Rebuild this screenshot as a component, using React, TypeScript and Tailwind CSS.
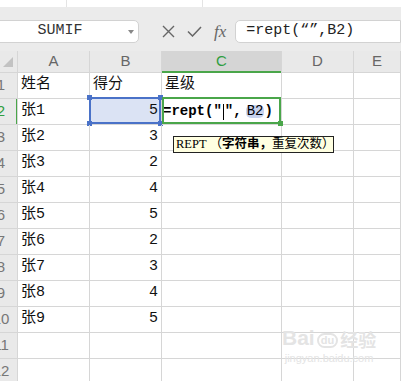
import React from 'react';

const cellFont = { fontFamily: '"Liberation Mono", "Noto Sans CJK SC", monospace' };

const rows: { name: string; score: string }[] = [
  { name: '姓名', score: '得分' },
  { name: '张1', score: '5' },
  { name: '张2', score: '3' },
  { name: '张3', score: '2' },
  { name: '张4', score: '4' },
  { name: '张5', score: '5' },
  { name: '张6', score: '2' },
  { name: '张7', score: '3' },
  { name: '张8', score: '4' },
  { name: '张9', score: '5' },
  { name: '', score: '' },
  { name: '', score: '' },
];

const Cell = ({ className = '', children }: { className?: string; children?: React.ReactNode }) => (
  <div className={`relative shrink-0 h-full border-r border-b border-[#d6d6d6] ${className}`}>{children}</div>
);

export default function App() {
  return (
    <div className="relative w-[401px] h-[381px] overflow-hidden bg-white" style={cellFont}>
      {/* top strip */}
      <div className="h-[7px] bg-white flex">
        <div className="w-[67px] border-r border-[#e4e4e4]" />
        <div className="w-[136px] border-r border-[#e4e4e4]" />
      </div>

      {/* formula bar */}
      <div className="h-[44px] bg-[#ebebeb] flex items-start pt-[13px]">
        <div className="ml-[-7px] w-[146px] h-[23px] bg-white border border-[#d2d2d2] rounded-[5px] flex items-center">
          <span className="flex-1 text-center text-[15px] text-[#333] pl-[2px]">SUMIF</span>
          <span className="w-[14px] flex justify-center">
            <span className="block w-0 h-0 border-l-[3px] border-r-[3px] border-t-[4px] border-l-transparent border-r-transparent border-t-[#888]" />
          </span>
        </div>
        <div className="flex items-center h-[23px] ml-[23px] gap-[12px] text-[#666]">
          <svg width="13" height="13" viewBox="0 0 13 13">
            <path d="M1 1 L12 12 M12 1 L1 12" stroke="#666" strokeWidth="1.4" />
          </svg>
          <svg width="15" height="11" viewBox="0 0 15 11">
            <path d="M1 5.5 L5.5 10 L14 1" stroke="#666" strokeWidth="1.5" fill="none" />
          </svg>
          <span className="italic text-[17px] leading-none" style={{ fontFamily: '"Liberation Serif", serif' }}>
            fx
          </span>
        </div>
        <div className="ml-[9px] flex-1 h-[23px] bg-white border border-[#d2d2d2] rounded-l-[5px] flex items-center pl-[10px] text-[15px] text-[#222]">
          =rept(“”,B2)
        </div>
      </div>

      {/* column headers */}
      <div className="flex h-[22px] bg-[#e9e9e9] text-[15px] text-[#666]" style={{ fontFamily: '"Liberation Sans", sans-serif' }}>
        <Cell className="w-[18px] border-[#c8c8c8]">
          <div className="absolute right-[4px] bottom-[4px] w-0 h-0 border-l-[10px] border-t-[10px] border-l-transparent border-t-transparent border-r-0 border-b-0" style={{}} />
          <svg className="absolute left-[3px] top-[6px]" width="10" height="10" viewBox="0 0 10 10">
            <path d="M10 0 L10 10 L0 10 Z" fill="#c2c2c2" />
          </svg>
        </Cell>
        <Cell className="w-[72px] border-[#c8c8c8] flex items-center justify-center">A</Cell>
        <Cell className="w-[72px] border-[#c8c8c8] flex items-center justify-center">B</Cell>
        <Cell className="w-[120px] bg-[#d5d5d5] border-[#c8c8c8] flex items-center justify-center text-[#2f9e3f]">
          C
          <div className="absolute left-0 right-0 bottom-[-1px] h-[2px] bg-[#4aa64a]" />
        </Cell>
        <Cell className="w-[72px] border-[#c8c8c8] flex items-center justify-center">D</Cell>
        <Cell className="flex-1 border-[#c8c8c8] flex items-center justify-center">E</Cell>
      </div>

      {/* rows */}
      {rows.map((r, i) => {
        const n = i + 1;
        const active = n === 2;
        return (
          <div key={n} className="flex h-[26px] text-[15px] text-[#111]">
            <Cell className="w-[18px] bg-[#e9e9e9] border-[#c8c8c8] overflow-hidden">
              <div
                className={`absolute top-0 bottom-0 left-[-14px] w-[30px] flex items-center justify-center text-[15px] ${active ? 'text-[#2f9e3f]' : 'text-[#777]'}`}
                style={{ fontFamily: '"Liberation Sans", sans-serif' }}
              >
                {n}
              </div>
              {active && <div className="absolute right-[-1px] top-0 bottom-0 w-[2px] bg-[#4aa64a]" />}
            </Cell>
            <Cell className="w-[72px] flex items-center pl-[3px]">{r.name}</Cell>
            <Cell className={`w-[72px] flex items-center ${i === 0 ? 'pl-[3px]' : 'justify-end pr-[3px]'} ${active ? 'bg-[#dbe3f4]' : ''}`}>
              {r.score}
              {active && (
                <div className="absolute left-[-1px] top-[-2px] right-0 bottom-0 border-2 border-[#4a72c8]">
                  <span className="absolute left-[-4px] top-[-4px] w-[5px] h-[5px] bg-[#4a72c8]" />
                  <span className="absolute right-[-4px] top-[-4px] w-[5px] h-[5px] bg-[#4a72c8]" />
                  <span className="absolute left-[-4px] bottom-[-4px] w-[5px] h-[5px] bg-[#4a72c8]" />
                  <span className="absolute right-[-4px] bottom-[-4px] w-[5px] h-[5px] bg-[#4a72c8]" />
                </div>
              )}
            </Cell>
            <Cell className="w-[120px] flex items-center pl-[3px]">
              {i === 0 && '星级'}
              {active && (
                <>
                  <div className="absolute left-0 top-[-2px] right-0 bottom-0 border-2 border-[#4aa64a] z-10">
                    <span className="absolute right-[-4px] bottom-[-4px] w-[5px] h-[5px] bg-[#4aa64a]" />
                  </div>
                  <span className="flex items-center font-bold text-[14px] ml-[-2px] text-black whitespace-nowrap">
                    =rept(″<span className="w-[1px] h-[16px] bg-black mx-[1px]" />″,<span className="ml-[4px] px-[1px] rounded-[5px] bg-[#c7d3ee] font-normal leading-[13px]">B2</span>)
                  </span>
                  <div
                    className="absolute left-[11px] top-[37px] w-[161px] h-[17px] bg-[#ffffe1] border border-[#222] z-20 flex items-center pl-[2px] text-[12.5px] text-black whitespace-nowrap"
                    style={{ fontFamily: '"Liberation Serif", "Noto Sans CJK SC", serif' }}
                  >
                    REPT （<b>字符串，</b>重复次数）
                  </div>
                </>
              )}
            </Cell>
            <Cell className="w-[72px]" />
            <Cell className="flex-1" />
          </div>
        );
      })}

      {/* watermark */}
      <div className="absolute left-[282px] top-[327px] flex flex-col items-center text-[#e4e4e4] pointer-events-none" style={{ fontFamily: '"Liberation Sans", sans-serif' }}>
        <div className="flex items-end font-bold text-[21px] leading-none">
          Bai
          <span className="mx-[2px] rounded-full border-2 border-[#e4e4e4] text-[11px] px-[2px]">du</span>
          <span className="text-[18px]" style={{ fontFamily: '"Noto Sans CJK SC", sans-serif' }}>经验</span>
        </div>
        <div className="text-[11px] mt-[2px]">jingyan.baidu.com</div>
      </div>
    </div>
  );
}
